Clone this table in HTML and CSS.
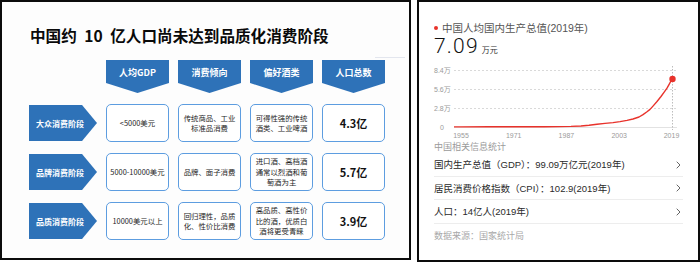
FILE: index.html
```html
<!DOCTYPE html>
<html lang="zh-CN">
<head>
<meta charset="utf-8">
<link rel="stylesheet" href="styles.css">
</head>
<body>
<div class="page">
  <section class="slide">
    <h1 class="title">中国约 <span class="num">10</span> 亿人口尚未达到品质化消费阶段</h1>
    <div class="rule"></div>
    <div class="grid">
      <div class="corner"></div>
      <div class="head">人均GDP</div>
      <div class="head">消费倾向</div>
      <div class="head">偏好酒类</div>
      <div class="head">人口总数</div>

      <div class="stage">大众消费阶段</div>
      <div class="cell">&lt;5000美元</div>
      <div class="cell">传统商品、工业<br>标准品消费</div>
      <div class="cell">可得性强的传统<br>酒类、工业啤酒</div>
      <div class="cell big">4.3亿</div>

      <div class="stage">品牌消费阶段</div>
      <div class="cell">5000-10000美元</div>
      <div class="cell">品牌、面子消费</div>
      <div class="cell">进口酒、高档酒<br>通常以烈酒和葡<br>萄酒为主</div>
      <div class="cell big">5.7亿</div>

      <div class="stage">品质消费阶段</div>
      <div class="cell">10000美元以上</div>
      <div class="cell">回归理性，品质<br>化、性价比消费</div>
      <div class="cell">高品质、高性价<br>比的酒，优质白<br>酒将更受青睐</div>
      <div class="cell big">3.9亿</div>
    </div>
  </section>

  <section class="card">
    <div class="stat-title"><span class="dot"></span>中国人均国内生产总值(2019年)</div>
    <div class="value"><span class="amount">7.09</span><span class="unit">万元</span></div>
    <svg class="chart" width="253" height="78" viewBox="434 62 253 78" xmlns="http://www.w3.org/2000/svg">
      <g class="grid-lines" stroke="#d9d9d9" stroke-width="1" stroke-dasharray="2 2">
        <line x1="455" y1="70.5" x2="678" y2="70.5"/>
        <line x1="455" y1="89.5" x2="678" y2="89.5"/>
        <line x1="455" y1="108.5" x2="678" y2="108.5"/>
      </g>
      <line x1="455" y1="127.5" x2="678" y2="127.5" stroke="#e2e2e2" stroke-width="1"/>
      <line x1="673.5" y1="66" x2="673.5" y2="130" stroke="#bdbdbd" stroke-width="1" stroke-dasharray="1.5 1.5"/>
      <g class="axis" font-size="7" fill="#9a9a9a" font-family="Liberation Sans, Noto Sans CJK SC, sans-serif">
        <text x="435" y="73">8.4万</text>
        <text x="435" y="92">5.6万</text>
        <text x="435" y="111">2.8万</text>
        <text x="441" y="130">0</text>
        <text x="462" y="137.5" text-anchor="middle">1955</text>
        <text x="514.7" y="137.5" text-anchor="middle">1971</text>
        <text x="567.4" y="137.5" text-anchor="middle">1987</text>
        <text x="620.2" y="137.5" text-anchor="middle">2003</text>
        <text x="672.5" y="137.5" text-anchor="middle">2019</text>
      </g>
      <polyline fill="none" stroke="#e8322b" stroke-width="1.4" stroke-linejoin="round"
        points="455,126.9 462,126.9 490,126.8 520,126.8 545,126.7 560,126.6 572,126.4 582,126 590,125.2 598,124.2 606,123.4 614,122.6 621,121.6 628,120.4 634,119 640,117 644,114.6 648,111.8 651,109.4 654,106.1 658,101.5 662,96.5 665,92.4 668,88.2 670,84.6 673,79"/>
      <circle cx="673.5" cy="79" r="3.2" fill="#e8322b"/>
    </svg>
    <div class="sub">中国相关信息统计</div>
    <ul class="list">
      <li><span>国内生产总值（GDP）：99.09万亿元(2019年)</span><svg class="chev" width="5" height="8" viewBox="0 0 5 8"><polyline points="0.7,0.7 4,4 0.7,7.3" fill="none" stroke="#666" stroke-width="1"/></svg></li>
      <li><span>居民消费价格指数（CPI）：102.9(2019年)</span><svg class="chev" width="5" height="8" viewBox="0 0 5 8"><polyline points="0.7,0.7 4,4 0.7,7.3" fill="none" stroke="#666" stroke-width="1"/></svg></li>
      <li><span>人口：14亿人(2019年)</span><svg class="chev" width="5" height="8" viewBox="0 0 5 8"><polyline points="0.7,0.7 4,4 0.7,7.3" fill="none" stroke="#666" stroke-width="1"/></svg></li>
    </ul>
    <div class="source">数据来源：国家统计局</div>
  </section>
</div>
</body>
</html>
```

FILE: styles.css
```css
* { box-sizing: border-box; }
html, body { margin: 0; padding: 0; background: #fff; }
.page {
  display: flex;
  align-items: flex-start;
  width: 700px;
  height: 263px;
  gap: 6px;
}

/* Left slide */
.slide {
  width: 411px;
  height: 260px;
  border: 2px solid #0c0c0c;
  padding: 23px 0 0 27px;
  font-family: "Noto Sans CJK SC", "Noto Sans", sans-serif;
  background: #fdfdfd;
}
.title {
  margin: 0 0 0 1px;
  font-size: 15.6px;
  line-height: 20px;
  font-weight: 700;
  color: #0a0a0a;
  white-space: nowrap;
  letter-spacing: 0;
}
.title .num { margin: 0 4px; }
.rule {
  width: 30px;
  height: 1px;
  margin: 12px 0 0 346px;
  background: #e3e6ee;
}
.grid {
  display: grid;
  grid-template-columns: 68px 63px 63px 63px 63px;
  grid-template-rows: 33px 38px 38px 38px;
  column-gap: 9px;
  row-gap: 11px;
  margin-top: 2px;
}
.head {
  background: #2e72b8;
  color: #fff;
  font-size: 9px;
  font-weight: 700;
  display: flex;
  align-items: center;
  justify-content: center;
  padding-bottom: 8px;
  clip-path: polygon(0 0, 100% 0, 100% 70%, 50% 100%, 0 70%);
}
.stage {
  align-self: center;
  height: 36px;
  background: #2e72b8;
  color: #fff;
  font-size: 8px;
  font-weight: 700;
  display: flex;
  align-items: center;
  padding-left: 7px;
  white-space: nowrap;
  clip-path: polygon(0 0, 78% 0, 100% 50%, 78% 100%, 0 100%);
}
.cell {
  border: 1.5px solid #5d9de0;
  border-radius: 5px;
  background: #fff;
  display: flex;
  align-items: center;
  justify-content: center;
  text-align: center;
  font-size: 7.4px;
  line-height: 10.5px;
  color: #1e1e1e;
  white-space: nowrap;
}
.cell.big {
  font-size: 11px;
  font-weight: 700;
  color: #111;
}

/* Right card */
.card {
  width: 283px;
  height: 262px;
  border: 2px solid #0c0c0c;
  padding: 19px 15px 0 15px;
  font-family: "Liberation Sans", "Noto Sans CJK SC", sans-serif;
  background: #fff;
}
.stat-title {
  display: flex;
  align-items: center;
  font-size: 10.5px;
  line-height: 14px;
  color: #555;
}
.dot {
  width: 4px;
  height: 4px;
  border-radius: 50%;
  background: #e8322b;
  margin-right: 4px;
}
.value {
  display: flex;
  align-items: baseline;
  height: 22px;
  line-height: 22px;
  color: #111;
}
.amount {
  font-family: Roboto, "Liberation Sans", sans-serif;
  font-weight: 300;
  font-size: 21px;
  letter-spacing: 1.2px;
}
.unit {
  font-family: "Noto Sans CJK SC", sans-serif;
  font-size: 8px;
  color: #333;
  margin-left: 3px;
}
.chart {
  display: block;
  margin: 5px 0 0 -1px;
}
.sub {
  margin-top: 1px;
  font-size: 9px;
  line-height: 12px;
  color: #9a9a9a;
}
.list {
  list-style: none;
  margin: 0;
  padding: 0;
}
.list li {
  display: flex;
  align-items: center;
  justify-content: space-between;
  padding: 5px 0 4.5px;
  border-bottom: 1px solid #ededed;
  font-size: 9.5px;
  line-height: 13px;
  color: #2a2a2a;
}
.chev { margin-right: 2px; }
.source {
  margin-top: 6.5px;
  font-size: 9px;
  line-height: 12px;
  color: #a8a8a8;
}
```
